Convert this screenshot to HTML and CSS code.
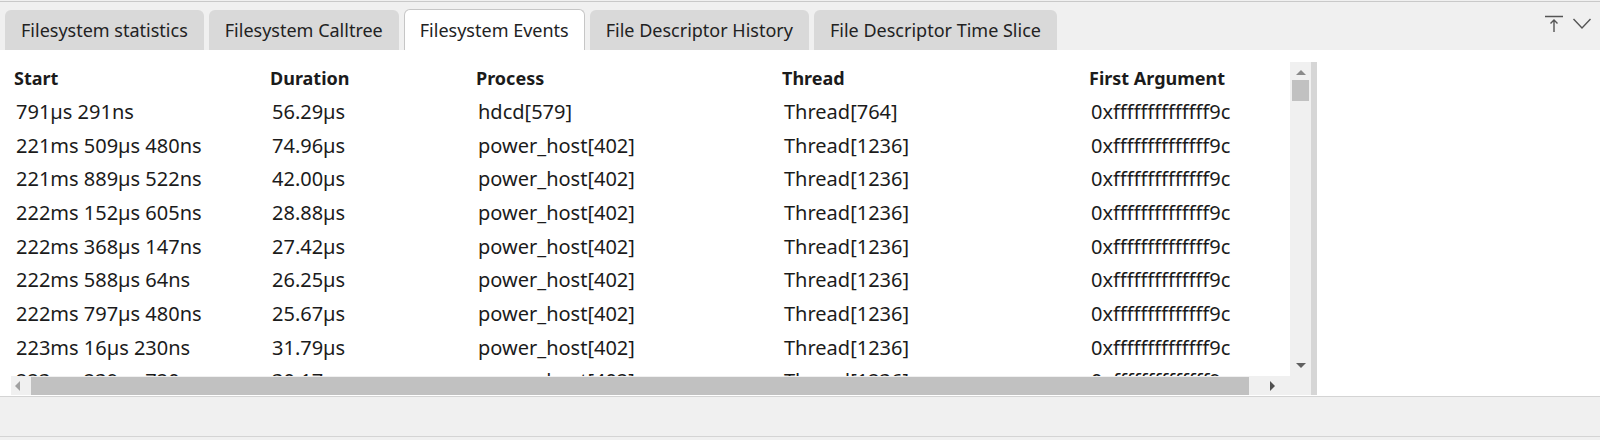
FILE: index.html
```html
<!DOCTYPE html>
<html>
<head>
<meta charset="utf-8">
<link rel="stylesheet" href="styles.css">
</head>
<body>
<div class="app">
  <div class="tabbar">
    <div class="tabs">
      <div class="tab">Filesystem statistics</div>
      <div class="tab">Filesystem Calltree</div>
      <div class="tab active">Filesystem Events</div>
      <div class="tab">File Descriptor History</div>
      <div class="tab">File Descriptor Time Slice</div>
    </div>
    <div class="tools">
      <svg class="icon" width="20" height="20" viewBox="0 0 20 20"><path d="M1 1.5H19M10 17V5M6.5 8.5L10 5L13.5 8.5" fill="none" stroke="#555" stroke-width="1.4"/></svg>
      <svg class="icon" width="20" height="20" viewBox="0 0 20 20"><path d="M1.5 4L10 13L18.5 4" fill="none" stroke="#555" stroke-width="1.4"/></svg>
    </div>
  </div>
  <div class="panel">
    <div class="table">
      <div class="viewport">
        <div class="row head">
          <div>Start</div><div>Duration</div><div>Process</div><div>Thread</div><div>First Argument</div>
        </div>
        <div class="row"><div>791µs 291ns</div><div>56.29µs</div><div>hdcd[579]</div><div>Thread[764]</div><div>0xffffffffffffff9c</div></div>
        <div class="row"><div>221ms 509µs 480ns</div><div>74.96µs</div><div>power_host[402]</div><div>Thread[1236]</div><div>0xffffffffffffff9c</div></div>
        <div class="row"><div>221ms 889µs 522ns</div><div>42.00µs</div><div>power_host[402]</div><div>Thread[1236]</div><div>0xffffffffffffff9c</div></div>
        <div class="row"><div>222ms 152µs 605ns</div><div>28.88µs</div><div>power_host[402]</div><div>Thread[1236]</div><div>0xffffffffffffff9c</div></div>
        <div class="row"><div>222ms 368µs 147ns</div><div>27.42µs</div><div>power_host[402]</div><div>Thread[1236]</div><div>0xffffffffffffff9c</div></div>
        <div class="row"><div>222ms 588µs 64ns</div><div>26.25µs</div><div>power_host[402]</div><div>Thread[1236]</div><div>0xffffffffffffff9c</div></div>
        <div class="row"><div>222ms 797µs 480ns</div><div>25.67µs</div><div>power_host[402]</div><div>Thread[1236]</div><div>0xffffffffffffff9c</div></div>
        <div class="row"><div>223ms 16µs 230ns</div><div>31.79µs</div><div>power_host[402]</div><div>Thread[1236]</div><div>0xffffffffffffff9c</div></div>
        <div class="row"><div>223ms 239µs 720ns</div><div>30.17µs</div><div>power_host[402]</div><div>Thread[1236]</div><div>0xffffffffffffff9c</div></div>
      </div>
      <div class="vscroll">
        <div class="arrow up"></div>
        <div class="vthumb"></div>
        <div class="vspace"></div>
        <div class="arrow down"></div>
      </div>
      <div class="vedge"></div>
      <div class="hscroll">
        <div class="arrow left"></div>
        <div class="hthumb"></div>
        <div class="arrow right"></div>
      </div>
    </div>
  </div>
  <div class="status"></div>
</div>
</body>
</html>
```
FILE: styles.css
```css
* { box-sizing: border-box; }
html, body { margin: 0; padding: 0; }
body {
  width: 1600px;
  height: 440px;
  overflow: hidden;
  background: #f0f0f0;
  font-family: "Noto Sans", "Open Sans", sans-serif;
  color: #1b1b1b;
}
.app { padding-top: 1px; }
.tabbar {
  border-top: 1px solid #c9c9c9;
  height: 49px;
  display: flex;
  justify-content: space-between;
  background: #f0f0f0;
}
.tabs {
  display: flex;
  align-items: flex-end;
  gap: 5px;
  padding-left: 5px;
}
.tab {
  height: 40px;
  padding: 0 16px;
  display: flex;
  align-items: center;
  background: #d9d9d9;
  border-radius: 6px 6px 0 0;
  font-size: 18px;
  color: #222;
  white-space: nowrap;
}
.tab.active {
  background: #fff;
  border: 1px solid #c6c6c6;
  border-bottom: none;
  height: 41px;
  padding: 0 15px;
}
.tools {
  display: flex;
  gap: 8px;
  padding: 13px 8px 0 0;
}
.icon { display: block; }
.panel {
  background: #fff;
  height: 347px;
  padding: 12px 0 0 11px;
  border-bottom: 1px solid #d4d4d4;
}
.table {
  width: 1306px;
  height: 333px;
  display: grid;
  grid-template-columns: 1279px 21px 6px;
  grid-template-rows: 314px 19px;
}
.viewport {
  overflow: hidden;
  grid-column: 1;
  grid-row: 1;
}
.row {
  display: grid;
  grid-template-columns: 256px 206px 306px 307px 300px;
  height: 33.7px;
  align-items: center;
  font-size: 20px;
  white-space: nowrap;
  padding-left: 5px;
}
.row.head { font-weight: bold; font-size: 18px; padding-left: 3px; height: 32.5px; }
.vscroll {
  grid-column: 2;
  grid-row: 1 / span 2;
  background: #f0f0f0;
  display: flex;
  flex-direction: column;
  align-items: center;
  padding: 8px 2px 0;
}
.vedge {
  grid-column: 3;
  grid-row: 1 / span 2;
  background: #d6d6d6;
}
.vthumb { width: 17px; height: 21px; background: #c1c1c1; margin-top: 5px; }
.vspace { flex: 1; }
.hscroll {
  grid-column: 1;
  grid-row: 2;
  background: #f0f0f0;
  display: flex;
  align-items: center;
  padding: 0 9px 0 4px;
}
.hthumb { height: 18px; background: #c1c1c1; width: 1218px; margin-left: 11px; }
.arrow { width: 0; height: 0; border-style: solid; }
.arrow.up { border-width: 0 5px 5px 5px; border-color: transparent transparent #8a8a8a transparent; }
.arrow.down { border-width: 5px 5px 0 5px; border-color: #606060 transparent transparent transparent; margin-bottom: 27px; }
.arrow.left { border-width: 5px 5px 5px 0; border-color: transparent #a0a0a0 transparent transparent; }
.arrow.right { border-width: 5px 0 5px 5px; border-color: transparent transparent transparent #505050; margin-left: 21px; }
.status {
  height: 40px;
  background: #f0f0f0;
  border-bottom: 1px solid #d4d4d4;
}
```
